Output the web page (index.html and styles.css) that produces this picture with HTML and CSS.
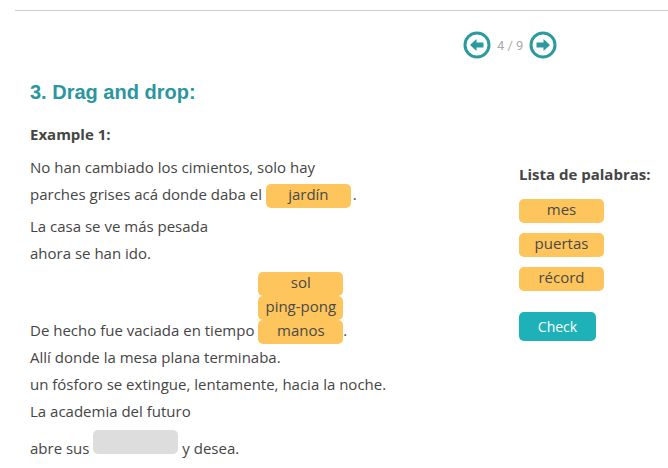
FILE: index.html
```html
<!DOCTYPE html>
<html lang="en">
<head>
    <meta charset="UTF-8">
    <meta name="viewport" content="width=device-width, initial-scale=1.0">
    <title>Drag and drop</title>
    <link rel="stylesheet" href="styles.css">
</head>
<body>
    <div class="topline"></div>
    <div class="pager">
        <svg class="nav-btn" width="28" height="28" viewBox="0 0 28 28">
            <circle cx="14" cy="14" r="12" fill="none" stroke="#2b9a9e" stroke-width="3"/>
            <path d="M7 14 L13.5 8 L13.5 11.6 L20.5 11.6 L20.5 16.4 L13.5 16.4 L13.5 20 Z" fill="#2b9a9e"/>
        </svg>
        <span class="page-count">4 / 9</span>
        <svg class="nav-btn" width="28" height="28" viewBox="0 0 28 28">
            <circle cx="14" cy="14" r="12" fill="none" stroke="#2b9a9e" stroke-width="3"/>
            <path d="M21 14 L14.5 8 L14.5 11.6 L7.5 11.6 L7.5 16.4 L14.5 16.4 L14.5 20 Z" fill="#2b9a9e"/>
        </svg>
    </div>
    <h2 class="title">3. Drag and drop:</h2>
    <div class="exercise">
        <div class="text-col">
            <div class="example">Example 1:</div>
            <div class="para">
                <div class="line">No han cambiado los cimientos, solo hay</div>
                <div class="line">parches grises acá donde daba el <span class="word">jardín</span>.</div>
            </div>
            <div class="para">
                <div class="line">La casa se ve más pesada</div>
                <div class="line">ahora se han ido.</div>
            </div>
            <div class="para">
                <div class="line">De hecho fue vaciada en tiempo <span class="stack"><span class="word">sol</span><span class="word">ping-pong</span><span class="word">manos</span></span>.</div>
                <div class="line">Allí donde la mesa plana terminaba.</div>
                <div class="line">un fósforo se extingue, lentamente, hacia la noche.</div>
                <div class="line">La academia del futuro</div>
            </div>
            <div class="para">
                <div class="line">abre sus <span class="word empty"></span>y desea.</div>
            </div>
        </div>
        <div class="bank-col">
            <div class="bank-title">Lista de palabras:</div>
            <div class="bank">
                <span class="word">mes</span>
                <span class="word">puertas</span>
                <span class="word">récord</span>
            </div>
            <button class="check">Check</button>
        </div>
    </div>
</body>
</html>
```

FILE: styles.css
```css
body {
    margin: 0;
    font-family: 'Open Sans', sans-serif;
    color: #454545;
    background: #ffffff;
}
.topline {
    margin: 10px 0 0 15px;
    border-top: 1px solid #cccccc;
}
.pager {
    display: flex;
    align-items: center;
    gap: 6px;
    margin: 20px 0 0 463px;
    height: 28px;
}
.nav-btn {
    display: block;
    cursor: pointer;
}
.page-count {
    font-family: Roboto, sans-serif;
    font-size: 13px;
    color: #aaaaaa;
}
.title {
    margin: 21px 0 0 30px;
    font-family: 'Liberation Sans', Arial, sans-serif;
    font-size: 20px;
    line-height: 24px;
    font-weight: bold;
    color: #2a96a0;
}
.exercise {
    display: grid;
    grid-template-columns: 489px 1fr;
    padding-left: 30px;
    margin-top: 20px;
}
.example {
    font-size: 15px;
    font-weight: bold;
    line-height: 20px;
    margin-bottom: 10px;
}
.para {
    margin-bottom: 5px;
}
.line {
    font-size: 15px;
    line-height: 27px;
    white-space: nowrap;
}
.word {
    display: inline-block;
    box-sizing: border-box;
    width: 85px;
    height: 24px;
    padding-bottom: 4px;
    margin-right: 2px;
    background: #fdc55b;
    border-radius: 5px;
    font-size: 15px;
    line-height: 20px;
    text-align: center;
    color: #4a4a4a;
}
.word.empty {
    background: #dddddd;
    margin-right: 4px;
}
.stack {
    display: inline-block;
    vertical-align: baseline;
    margin-bottom: -3px;
}
.stack .word {
    display: block;
    margin: 0;
}
.bank-col {
    padding-top: 40px;
}
.bank-title {
    font-size: 15px;
    font-weight: bold;
    line-height: 20px;
}
.bank {
    display: flex;
    flex-direction: column;
    gap: 10px;
    margin-top: 15px;
}
.bank .word {
    margin: 0;
}
.check {
    margin-top: 21px;
    width: 77px;
    height: 29px;
    padding: 0;
    font-family: 'Open Sans', sans-serif;
    font-size: 14px;
    color: #ffffff;
    background: #1eb1b7;
    border: none;
    border-radius: 5px;
    cursor: pointer;
}
```
